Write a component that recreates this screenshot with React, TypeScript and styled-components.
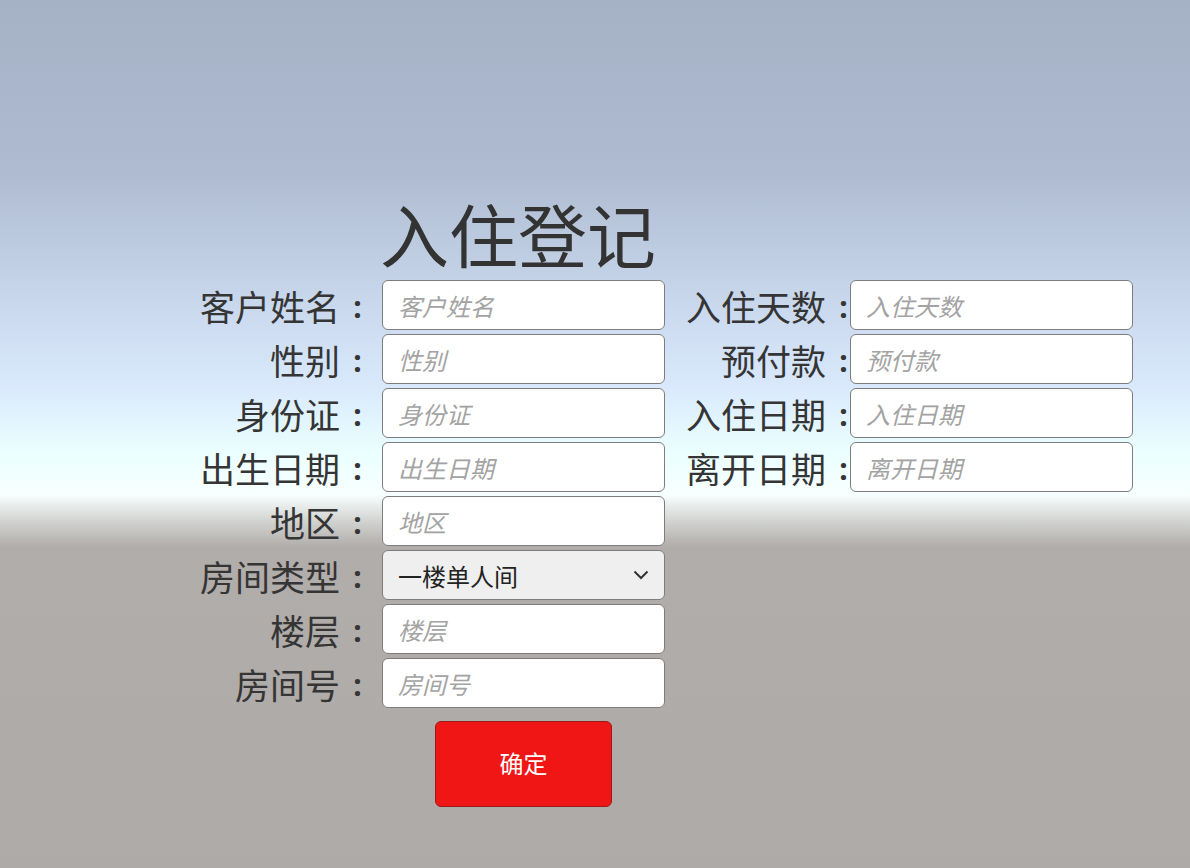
import styled, { createGlobalStyle } from "styled-components";

const GlobalStyle = createGlobalStyle`
  html, body {
    margin: 0;
    padding: 0;
    height: 100%;
  }
  body {
    font-family: "Noto Sans CJK SC", "Noto Sans", sans-serif;
    color: #333;
  }
  #root {
    min-height: 100vh;
  }
`;

type FieldDef = { label: string; name: string };

const leftFields: FieldDef[] = [
  { label: "客户姓名", name: "customerName" },
  { label: "性别", name: "gender" },
  { label: "身份证", name: "idCard" },
  { label: "出生日期", name: "birthday" },
  { label: "地区", name: "region" },
];

const leftTail: FieldDef[] = [
  { label: "楼层", name: "floor" },
  { label: "房间号", name: "roomNo" },
];

const rightFields: FieldDef[] = [
  { label: "入住天数", name: "days" },
  { label: "预付款", name: "deposit" },
  { label: "入住日期", name: "checkIn" },
  { label: "离开日期", name: "checkOut" },
];

export default function App() {
  return (
    <Page>
      <GlobalStyle />
      <Form onSubmit={e => e.preventDefault()}>
        <Column>
          <TitleRow>
            <Title>入住登记</Title>
          </TitleRow>
          {leftFields.map(f => (
            <Row key={f.name}>
              <Label htmlFor={f.name}>
                {f.label}
                <Colon>:</Colon>
              </Label>
              <Input id={f.name} name={f.name} placeholder={f.label} autoComplete="off" />
            </Row>
          ))}
          <Row>
            <Label htmlFor="roomType">
              房间类型
              <Colon>:</Colon>
            </Label>
            <SelectWrap>
              <Select id="roomType" name="roomType" defaultValue="single1">
                <option value="single1">一楼单人间</option>
                <option value="double1">一楼双人间</option>
                <option value="single2">二楼单人间</option>
              </Select>
              <Chevron viewBox="0 0 16 10">
                <path d="M1.5 1.5 8 8 14.5 1.5" fill="none" stroke="#333" strokeWidth="2" />
              </Chevron>
            </SelectWrap>
          </Row>
          {leftTail.map(f => (
            <Row key={f.name}>
              <Label htmlFor={f.name}>
                {f.label}
                <Colon>:</Colon>
              </Label>
              <Input id={f.name} name={f.name} placeholder={f.label} autoComplete="off" />
            </Row>
          ))}
          <ButtonRow>
            <Submit type="submit">确定</Submit>
          </ButtonRow>
        </Column>
        <RightColumn>
          {rightFields.map(f => (
            <Row key={f.name}>
              <Label htmlFor={f.name}>
                {f.label}
                <Colon>:</Colon>
              </Label>
              <Input $tucked id={f.name} name={f.name} placeholder={f.label} autoComplete="off" />
            </Row>
          ))}
        </RightColumn>
      </Form>
    </Page>
  );
}

const Page = styled.div`
  min-height: 100vh;
  background: linear-gradient(
    to bottom,
    #a5b1c5 0%,
    #aebbd1 20%,
    #c6d4ea 33%,
    #daeafc 45%,
    #eaffff 52%,
    #f8ffff 57%,
    #d2d4d1 60%,
    #b1adab 63%,
    #aeaaa8 100%
  );
  display: flex;
  justify-content: flex-start;
  padding-left: 200px;
  padding-top: 190px;
  box-sizing: border-box;
`;

const Form = styled.form`
  display: flex;
  align-items: flex-start;
  gap: 21px;
`;

const Column = styled.div`
  display: flex;
  flex-direction: column;
  gap: 4px;
`;

const RightColumn = styled(Column)`
  margin-top: 90px;
`;

const TitleRow = styled.div`
  height: 86px;
  padding-left: 180px;
  display: flex;
  align-items: center;
`;

const Title = styled.h1`
  margin: 0;
  font-size: 69px;
  font-weight: 400;
  line-height: 1;
  color: #333;
`;

const Row = styled.div`
  display: flex;
  align-items: center;
  height: 50px;
`;

const Label = styled.label`
  width: 175px;
  margin-right: 7px;
  text-align: right;
  font-size: 35px;
  line-height: 1;
  white-space: nowrap;
  color: #353535;
`;

// small colon centred in a full ideograph cell
const Colon = styled.span`
  display: inline-block;
  width: 35px;
  text-align: center;
  font-family: "Noto Sans", sans-serif;
  font-size: 30px;
  font-weight: 700;
  vertical-align: 3px;
`;

const Input = styled.input<{ $tucked?: boolean }>`
  position: relative;
  box-sizing: border-box;
  width: 283px;
  height: 50px;
  margin-left: ${p => (p.$tucked ? "-18px" : "0")};
  padding: 0 15px;
  border: 1px solid #7d7d7d;
  border-radius: 6px;
  background: #fff;
  font-family: inherit;
  font-size: 24px;
  color: #222;
  outline: none;

  &::placeholder {
    color: #a3a3a3;
    font-style: italic;
  }
`;

const SelectWrap = styled.div`
  position: relative;
  width: 283px;
  height: 50px;
`;

const Select = styled.select`
  appearance: none;
  box-sizing: border-box;
  width: 100%;
  height: 100%;
  padding: 0 40px 0 15px;
  border: 1px solid #7d7d7d;
  border-radius: 6px;
  background: #efefef;
  font-family: inherit;
  font-size: 24px;
  color: #222;
  outline: none;
`;

const Chevron = styled.svg`
  position: absolute;
  right: 16px;
  top: 20px;
  width: 16px;
  height: 10px;
  pointer-events: none;
`;

const ButtonRow = styled.div`
  display: flex;
  justify-content: center;
  padding-left: 182px;
  margin-top: 9px;
`;

const Submit = styled.button`
  width: 177px;
  height: 86px;
  padding-bottom: 4px;
  border: 1px solid #9b1a1a;
  border-radius: 6px;
  background: #f01616;
  color: #fff;
  font-family: inherit;
  font-size: 24px;
  cursor: pointer;
`;
